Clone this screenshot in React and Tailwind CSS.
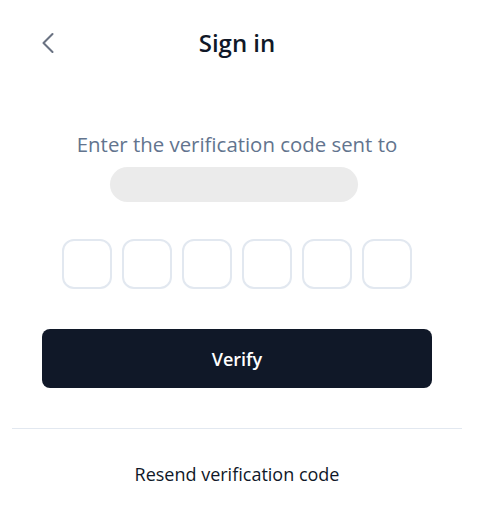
import { ChevronLeft } from 'lucide-react';

export default function App() {
  const digits = [0, 1, 2, 3, 4, 5];

  return (
    <div className="min-h-screen bg-white font-['Open_Sans','Noto_Sans',sans-serif]">
      <div className="w-[474px]">
        <header className="grid grid-cols-[1fr_auto_1fr] items-center pt-[25px]">
          <button type="button" className="justify-self-start pl-[30px] text-gray-500">
            <ChevronLeft size={36} strokeWidth={1.4} />
          </button>
          <h1 className="text-2xl leading-8 font-semibold text-gray-900">Sign in</h1>
          <div />
        </header>

        <div className="flex flex-col items-center">
          <p className="mt-[69px] text-[20.4px] leading-7 text-slate-500">Enter the verification code sent to</p>
          <div className="mt-[9px] mr-[6px] h-[35px] w-[248px] rounded-full bg-[#ebebeb]" />

          <div className="mt-[37px] flex gap-[10px]">
            {digits.map((d) => (
              <input
                key={d}
                type="text"
                maxLength={1}
                className="h-[50px] w-[50px] rounded-xl border-2 border-slate-200 bg-white text-center text-lg text-gray-900 outline-none"
              />
            ))}
          </div>
        </div>

        <button
          type="button"
          className="mx-[42px] mt-10 flex h-[59px] w-[390px] items-center justify-center rounded-lg bg-gray-900 text-lg font-semibold text-white"
        >
          Verify
        </button>

        <div className="mx-3 mt-10 h-px bg-slate-200" />

        <p className="mt-[31px] text-center text-lg leading-7 text-gray-900">Resend verification code</p>
      </div>
    </div>
  );
}
